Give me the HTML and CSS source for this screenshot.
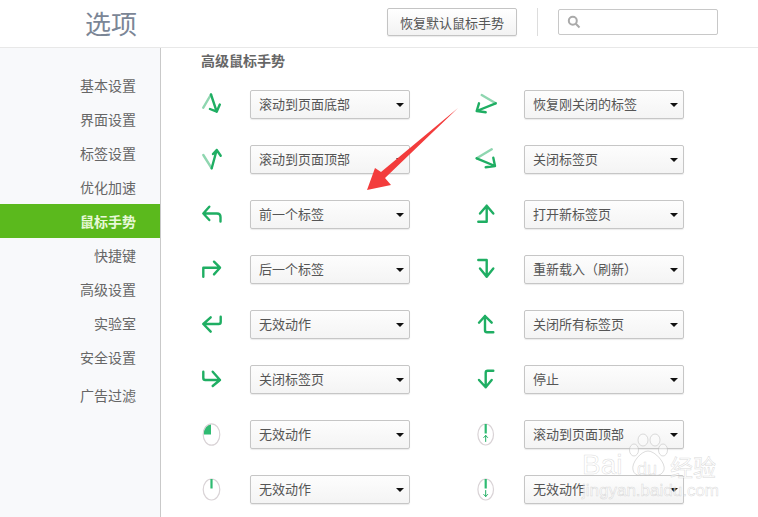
FILE: index.html
```html
<!DOCTYPE html>
<html lang="zh-CN">

<head>
    <meta charset="UTF-8">
    <title>选项</title>
    <link rel="stylesheet" href="styles.css">
</head>

<body>
    <header class="topbar">
        <h1 class="page-title">选项</h1>
        <button class="reset-btn" type="button">恢复默认鼠标手势</button>
        <span class="topbar-divider"></span>
        <div class="search-box">
            <svg class="search-icon" width="14" height="14" viewBox="0 0 14 14">
                <circle cx="5.8" cy="5.8" r="4" />
                <path d="M8.8 8.8 L12.5 12.5" />
            </svg>
        </div>
    </header>

    <div class="layout">
        <nav class="sidebar">
            <a class="nav-item">基本设置</a>
            <a class="nav-item">界面设置</a>
            <a class="nav-item">标签设置</a>
            <a class="nav-item">优化加速</a>
            <a class="nav-item active">鼠标手势</a>
            <a class="nav-item">快捷键</a>
            <a class="nav-item">高级设置</a>
            <a class="nav-item">实验室</a>
            <a class="nav-item">安全设置</a>
            <a class="nav-item last">广告过滤</a>
        </nav>

        <main class="content">
            <h2 class="section-title">高级鼠标手势</h2>
            <div class="gesture-grid">
                <div class="gesture">
                    <svg class="gesture-icon" viewBox="0 0 24 24">
                        <path class="faded" d="M3.3 14.7 L11 1.5" />
                        <path d="M11 1.5 L16.7 18.7 M10 16 L16.7 18.7 L19.8 11.5" />
                    </svg>
                    <div class="select-box"><select><option>滚动到页面底部</option></select></div>
                </div>
                <div class="gesture">
                    <svg class="gesture-icon" viewBox="0 0 24 24">
                        <path class="faded" d="M7.7 2 L21.7 10.3" />
                        <path d="M21.7 10.3 L2.7 18 M5 10.3 L2.7 18 L11.7 19.3" />
                    </svg>
                    <div class="select-box"><select><option>恢复刚关闭的标签</option></select></div>
                </div>

                <div class="gesture">
                    <svg class="gesture-icon" viewBox="0 0 24 24">
                        <path class="faded" d="M3.3 7 L11.7 20.3" />
                        <path d="M11.7 20.3 L16.7 2 M13 6 L16.7 2 L20.7 7.7" />
                    </svg>
                    <div class="select-box"><select><option>滚动到页面顶部</option></select></div>
                </div>
                <div class="gesture">
                    <svg class="gesture-icon" viewBox="0 0 24 24">
                        <path class="faded" d="M17.7 1.3 L2.7 10.3" />
                        <path d="M2.7 10.3 L21 18 M19.3 9.7 L21 18 L11.7 19.3" />
                    </svg>
                    <div class="select-box"><select><option>关闭标签页</option></select></div>
                </div>

                <div class="gesture">
                    <svg class="gesture-icon" viewBox="0 0 24 24">
                        <path d="M3.5 10.5 H17 Q20.5 10.5 20.5 14 V18.5 M9.3 3.7 L3.3 10.5 L9.3 17" />
                    </svg>
                    <div class="select-box"><select><option>前一个标签</option></select></div>
                </div>
                <div class="gesture">
                    <svg class="gesture-icon" viewBox="0 0 24 24">
                        <path d="M4.3 18.7 H12.7 V2.7 M6 10.5 L12.7 2.7 L19.3 10.5" />
                    </svg>
                    <div class="select-box"><select><option>打开新标签页</option></select></div>
                </div>

                <div class="gesture">
                    <svg class="gesture-icon" viewBox="0 0 24 24">
                        <path d="M3.3 18.7 V9.7 H20 M14 3.7 L20 9.7 L14 16.4" />
                    </svg>
                    <div class="select-box"><select><option>后一个标签</option></select></div>
                </div>
                <div class="gesture">
                    <svg class="gesture-icon" viewBox="0 0 24 24">
                        <path d="M4.3 2 H12.7 V18.7 M6 10.5 L12.7 18.7 L19.3 10.5" />
                    </svg>
                    <div class="select-box"><select><option>重新载入（刷新）</option></select></div>
                </div>

                <div class="gesture">
                    <svg class="gesture-icon" viewBox="0 0 24 24">
                        <path d="M20.7 3.7 V9 Q20.7 11 18.7 11 H3.3 M10.7 4.3 L3.3 11 L10.7 18.7" />
                    </svg>
                    <div class="select-box"><select><option>无效动作</option></select></div>
                </div>
                <div class="gesture">
                    <svg class="gesture-icon" viewBox="0 0 24 24">
                        <path d="M19.3 19.3 H13 Q11 19.3 11 17.3 V3 M5 9.7 L11 3 L17.7 9.7" />
                    </svg>
                    <div class="select-box"><select><option>关闭所有标签页</option></select></div>
                </div>

                <div class="gesture">
                    <svg class="gesture-icon" viewBox="0 0 24 24">
                        <path d="M3.3 3.7 V10 Q3.3 12 5.3 12 H20 M12.7 3.7 L20 12 L12.7 18" />
                    </svg>
                    <div class="select-box"><select><option>关闭标签页</option></select></div>
                </div>
                <div class="gesture">
                    <svg class="gesture-icon" viewBox="0 0 24 24">
                        <path d="M19.3 2.7 H13.7 Q11.7 2.7 11.7 4.7 V19.3 M5 12 L11.7 19.3 L17.7 12" />
                    </svg>
                    <div class="select-box"><select><option>停止</option></select></div>
                </div>

                <div class="gesture">
                    <svg class="gesture-icon" viewBox="0 0 24 24">
                        <path class="mouse-fill" d="M11 11.5 H3.5 V9 Q4 2 11 1 Z" />
                        <ellipse class="mouse-shell" cx="11.5" cy="11.5" rx="8.3" ry="10.7" />
                    </svg>
                    <div class="select-box"><select><option>无效动作</option></select></div>
                </div>
                <div class="gesture">
                    <svg class="gesture-icon" viewBox="0 0 24 24">
                        <ellipse class="mouse-shell" cx="11.7" cy="11.5" rx="7.8" ry="10.5" />
                        <path class="mouse-wheel" d="M11.7 1 V10.5" />
                        <path class="mouse-hint" d="M11.7 18.5 V12.5 M9.8 14.5 L11.7 12.5 L13.6 14.5" />
                    </svg>
                    <div class="select-box"><select><option>滚动到页面顶部</option></select></div>
                </div>

                <div class="gesture">
                    <svg class="gesture-icon" viewBox="0 0 24 24">
                        <ellipse class="mouse-shell" cx="11.5" cy="11.5" rx="8.3" ry="10.5" />
                        <path class="mouse-wheel" d="M11.5 1 V10.5" />
                    </svg>
                    <div class="select-box"><select><option>无效动作</option></select></div>
                </div>
                <div class="gesture">
                    <svg class="gesture-icon" viewBox="0 0 24 24">
                        <ellipse class="mouse-shell" cx="11.7" cy="11.5" rx="7.8" ry="10.5" />
                        <path class="mouse-wheel" d="M11.7 1 V10.5" />
                        <path class="mouse-hint" d="M11.7 12.5 V18.5 M9.8 16.5 L11.7 18.5 L13.6 16.5" />
                    </svg>
                    <div class="select-box"><select><option>无效动作</option></select></div>
                </div>
            </div>
        </main>
    </div>

    <!-- annotation drawn over the page -->
    <svg class="red-arrow" width="758" height="517" viewBox="0 0 758 517">
        <polygon points="458,108 385,178 391,185 367,190 375,168 381,172" />
    </svg>

    <div class="watermark">
        <svg class="paw" width="44" height="46" viewBox="0 0 44 46">
            <ellipse cx="8" cy="17" rx="4.5" ry="6" />
            <ellipse cx="17" cy="7" rx="5" ry="6" />
            <ellipse cx="29" cy="7" rx="5" ry="6" />
            <ellipse cx="37" cy="17" rx="4.5" ry="6" />
            <path d="M22 18 C15 18 5 30 7 37 C9 45 18 42 22 42 C26 42 35 45 38 37 C40 30 29 18 22 18 Z" />
        </svg>
        <span class="wm-bai">Bai</span>
        <span class="wm-du">du</span>
        <span class="wm-jy">经验</span>
        <span class="wm-url">jingyan.baidu.com</span>
    </div>
</body>

</html>
```
FILE: styles.css
```css
html,
body {
    margin: 0;
    padding: 0;
    height: 517px;
    overflow: hidden;
}

body {
    font-family: "Noto Sans CJK SC", "Liberation Sans", sans-serif;
    background-color: #fff;
    color: #555;
    position: relative;
}

/* Top bar */
.topbar {
    display: flex;
    align-items: center;
    height: 44px;
    padding-bottom: 3px;
    border-bottom: 1px solid #e8e8e8;
}

.page-title {
    margin: 0 0 0 85px;
    width: 302px;
    font-size: 26px;
    font-weight: 400;
    color: #7b8696;
}

.reset-btn {
    width: 130px;
    height: 28px;
    padding: 0;
    border: 1px solid #c4c4c4;
    border-radius: 2px;
    background: linear-gradient(#fff, #f2f2f2);
    box-shadow: 0 1px 1px rgba(0, 0, 0, 0.08);
    color: #555;
    font-family: inherit;
    font-size: 13px;
}

.topbar-divider {
    width: 1px;
    height: 28px;
    margin: 0 20px;
    background-color: #ddd;
}

.search-box {
    display: flex;
    align-items: center;
    box-sizing: border-box;
    width: 160px;
    height: 26px;
    padding-left: 8px;
    border: 1px solid #c8c8c8;
    border-radius: 2px;
}

.search-icon {
    fill: none;
    stroke: #aaa;
    stroke-width: 2;
}

/* Page body */
.layout {
    display: flex;
    height: 469px;
}

.sidebar {
    width: 160px;
    flex-shrink: 0;
    padding-top: 20px;
    background-color: #f8f9fb;
    border-right: 1px solid #c9c9c9;
}

.nav-item {
    display: block;
    height: 34px;
    line-height: 34px;
    padding-right: 24px;
    text-align: right;
    font-size: 14px;
    color: #666;
}

.nav-item.active {
    background-color: #5bb91d;
    color: #e8f8d8;
    font-weight: 700;
}

.nav-item.last {
    margin-top: 4px;
}

.content {
    flex: 1;
    padding: 2px 0 0 40px;
}

.section-title {
    margin: 0 0 7px;
    height: 20px;
    line-height: 20px;
    font-size: 14px;
    font-weight: 700;
    color: #666;
}

.gesture-grid {
    display: grid;
    grid-template-columns: 274px 274px;
    grid-auto-rows: 55px;
}

.gesture {
    display: flex;
    align-items: center;
    margin-left: -1px;
}

.gesture-icon {
    width: 24px;
    height: 24px;
    margin-right: 26px;
    fill: none;
    stroke: #1fae63;
    stroke-width: 2.4;
    stroke-linecap: round;
    stroke-linejoin: round;
}

.gesture-icon .faded {
    stroke: #8fd6b0;
}

.gesture-icon .mouse-shell {
    stroke: #d9d3d6;
    stroke-width: 1.2;
}

.gesture-icon .mouse-fill {
    fill: #2fbb72;
    stroke: none;
}

.gesture-icon .mouse-wheel {
    stroke: #2fbb72;
    stroke-width: 2.2;
    stroke-linecap: butt;
}

.gesture-icon .mouse-hint {
    stroke-width: 1;
}

.select-box {
    position: relative;
    width: 160px;
    height: 29px;
}

.select-box select {
    display: block;
    width: 100%;
    height: 100%;
    padding: 0 0 2px 8px;
    appearance: none;
    border: 1px solid #c6c6c6;
    border-radius: 2px;
    background: linear-gradient(#fdfdfd, #f4f4f4);
    box-shadow: 0 1px 1px rgba(0, 0, 0, 0.08);
    color: #555;
    font-family: inherit;
    font-size: 13px;
    text-spacing-trim: space-all;
}

.select-box::after {
    content: "";
    position: absolute;
    top: 13px;
    right: 6px;
    border-left: 4.5px solid transparent;
    border-right: 4.5px solid transparent;
    border-top: 4.5px solid #111;
}

/* Overlays */
.red-arrow {
    position: absolute;
    top: 0;
    left: 0;
    fill: #f33c3c;
}

.watermark {
    position: absolute;
    top: 430px;
    left: 580px;
    width: 150px;
    height: 80px;
    color: rgba(255, 255, 255, 0.6);
    -webkit-text-stroke: 0.5px rgba(185, 185, 185, 0.55);
    font-family: "Liberation Sans", sans-serif;
}

.paw {
    position: absolute;
    top: 3px;
    left: 46px;
    fill: rgba(255, 255, 255, 0.4);
    stroke: rgba(185, 185, 185, 0.5);
}

.wm-bai,
.wm-du,
.wm-jy,
.wm-url {
    position: absolute;
}

.wm-bai {
    top: 25px;
    left: 2px;
    font-size: 28px;
    line-height: 20px;
}

.wm-du {
    top: 32px;
    left: 57px;
    font-size: 18px;
    line-height: 14px;
}

.wm-jy {
    top: 25px;
    left: 90px;
    font-family: "Noto Sans CJK SC", sans-serif;
    font-size: 23px;
    line-height: 23px;
}

.wm-url {
    top: 55px;
    left: 2px;
    font-size: 17px;
    line-height: 12px;
}
```
